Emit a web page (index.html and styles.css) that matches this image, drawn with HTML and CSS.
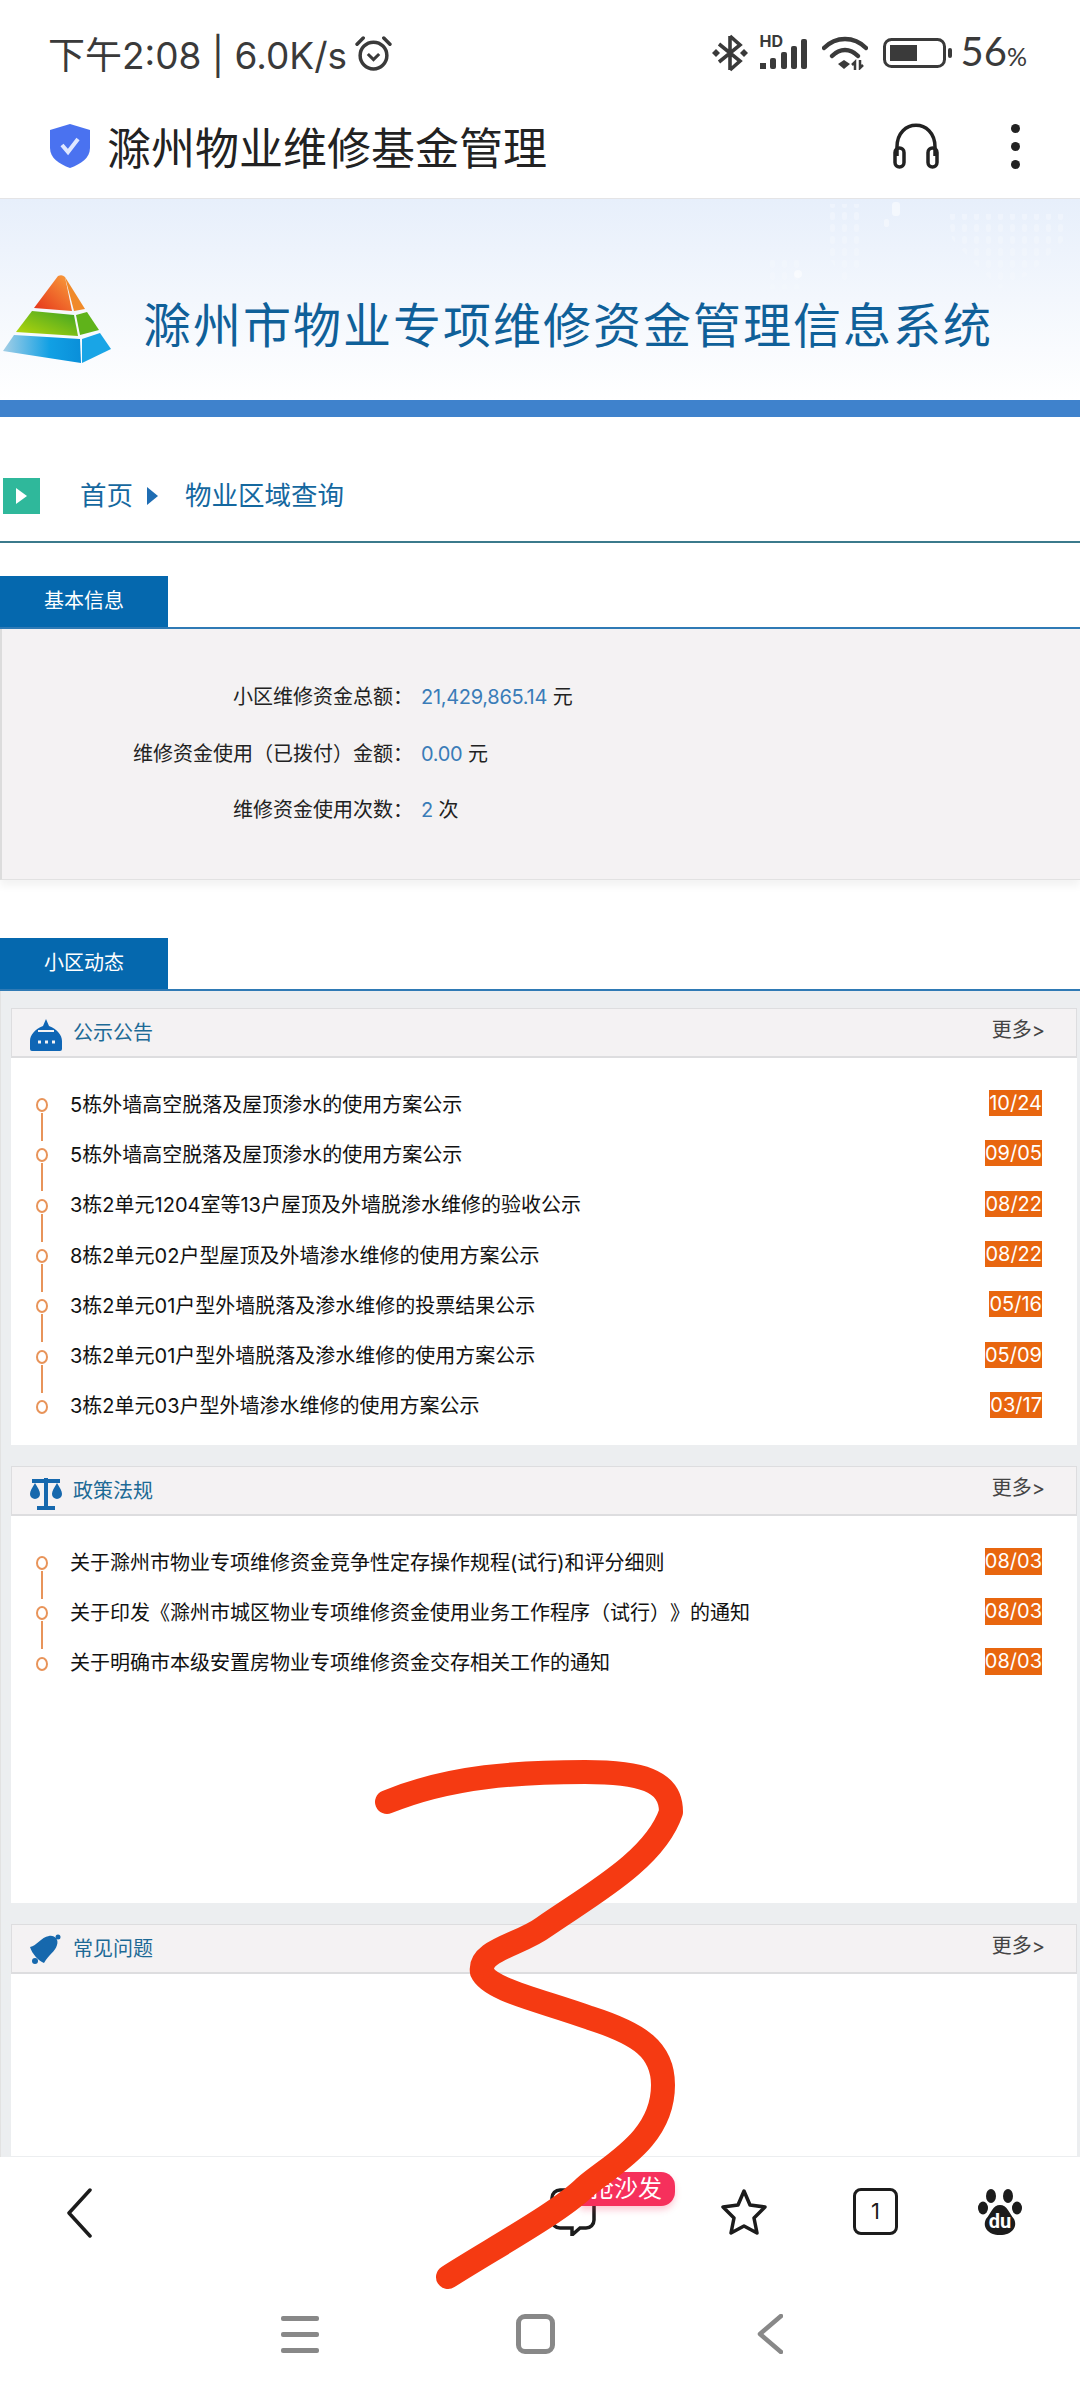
FILE: index.html
```html
<!DOCTYPE html>
<html lang="zh-CN">
<head>
<meta charset="utf-8">
<title>滁州物业维修基金管理</title>
<link rel="stylesheet" href="styles.css">
</head>
<body>
<div class="screen">
  <header class="status">
    <div class="status-left">
      <span class="clock">下午2:08 | 6.0K/s</span>
      <svg class="alarm" viewBox="0 0 36 36"><circle cx="18" cy="20" r="13" fill="none" stroke="#3a3a3a" stroke-width="3.4"/><path d="M2 9 8 3M34 9 28 3" stroke="#3a3a3a" stroke-width="3.4" stroke-linecap="round"/><path d="M12.500 18.500 18 24l5.500-5.500" fill="none" stroke="#3a3a3a" stroke-width="3"/></svg>
    </div>
    <div class="status-right">
      <svg class="bt" viewBox="0 0 36 38"><path d="M18 2v34M7 10l21 17-10 9M7 28l21-17L18 2" fill="none" stroke="#3a3a3a" stroke-width="3.600"/><path d="M0 19l4-4 4 4-4 4zM28 19l4-4 4 4-4 4z" fill="#3a3a3a"/></svg>
      <div class="signal">
        <span class="hd">HD</span>
        <svg class="bars" viewBox="0 0 48 30"><rect x="1" y="24" width="6" height="6" fill="#3a3a3a"/><rect x="11" y="19" width="6" height="11" rx="2" fill="#3a3a3a"/><rect x="22" y="13" width="6" height="17" rx="2" fill="#3a3a3a"/><rect x="32" y="7" width="6" height="23" rx="2" fill="#3a3a3a"/><rect x="42" y="0" width="6" height="30" rx="2" fill="#3a3a3a"/></svg>
      </div>
      <svg class="wifi" viewBox="0 0 46 34"><path d="M2 12C14 0 32 0 44 12" fill="none" stroke="#3a3a3a" stroke-width="4.500" stroke-linecap="round"/><path d="M10 20c8-8 18-8 26 0" fill="none" stroke="#3a3a3a" stroke-width="4.500" stroke-linecap="round"/><path d="M16 28l6-4 6 4-6 5z" fill="#3a3a3a"/><path d="M33 34V26l-3 3M38 24v8l3-3" fill="none" stroke="#3a3a3a" stroke-width="2.500"/></svg>
      <svg class="battery" viewBox="0 0 70 30"><rect x="1.500" y="1.500" width="60" height="27" rx="7" fill="none" stroke="#3a3a3a" stroke-width="3"/><rect x="7" y="7" width="27" height="16" fill="#3a3a3a"/><rect x="65" y="10" width="4" height="10" rx="2" fill="#3a3a3a"/></svg>
      <span class="pct">56<small>%</small></span>
    </div>
  </header>

  <div class="appbar">
    <svg class="shield" viewBox="0 0 40 44"><path d="M20 0l20 6v18c0 10-9 16-20 20C9 40 0 34 0 24V6z" fill="#4a72f0"/><path d="M12 21l6 7 10-13" fill="none" stroke="#dfe7ff" stroke-width="4"/></svg>
    <span class="appbar-title">滁州物业维修基金管理</span>
    <svg class="headset" viewBox="0 0 50 46"><path d="M6 33V24C6 -5 44 -5 44 24V33" fill="none" stroke="#222" stroke-width="3.500"/><rect x="4" y="25" width="9" height="19" rx="4.500" fill="none" stroke="#222" stroke-width="3.500"/><rect x="37" y="25" width="9" height="19" rx="4.500" fill="none" stroke="#222" stroke-width="3.500"/></svg>
    <div class="kebab"><i></i><i></i><i></i></div>
  </div>

  <div class="banner">
    <svg class="banner-map" viewBox="0 0 360 130">
      <defs>
        <pattern id="dots" width="12" height="12" patternUnits="userSpaceOnUse"><rect x="2" y="1" width="5" height="8" rx="2" fill="#fff"/></pattern>
        <linearGradient id="mapfade" x1="0" y1="0" x2="0" y2="1"><stop offset="0" stop-color="#fff" stop-opacity=".3"/><stop offset="1" stop-color="#fff" stop-opacity=".04"/></linearGradient>
        <mask id="mapmask"><rect width="360" height="130" fill="url(#mapfade)"/></mask>
      </defs>
      <g mask="url(#mapmask)">
        <path d="M228 15H345V40L310 75 280 90 250 60 232 40z" fill="url(#dots)"/>
        <path d="M105 5H145V60L125 85 110 60z" fill="url(#dots)"/>
        <path d="M50 60H85V90H50z" fill="url(#dots)"/>
      </g>
      <rect x="172" y="3" width="8" height="14" rx="3" fill="#fff" opacity=".5"/>
      <rect x="164" y="20" width="5" height="8" rx="2" fill="#fff" opacity=".4"/>
      <circle cx="78" cy="75" r="4" fill="#fff" opacity=".5"/>
    </svg>
    <svg class="pyramid" viewBox="2 276 110 90">
      <defs>
        <linearGradient id="pr" x1="0" y1="1" x2="1" y2="0"><stop offset="0" stop-color="#e5321a"/><stop offset="1" stop-color="#f9a13c"/></linearGradient>
        <linearGradient id="pg" x1="0" y1="1" x2="1" y2="0"><stop offset="0" stop-color="#b9d80a"/><stop offset="1" stop-color="#3da325"/></linearGradient>
        <linearGradient id="pb" x1="0" y1="0" x2="1" y2="0"><stop offset="0" stop-color="#a5cfe6"/><stop offset="0.6" stop-color="#11a0e4"/><stop offset="1" stop-color="#0a8fd9"/></linearGradient>
      </defs>
      <path d="M58 277Q62 275 65 278L72 312 34 309z" fill="url(#pr)"/>
      <path d="M65 278 85 310 74 312z" fill="#f08a2a"/>
      <path d="M32 312 74 316 78 337 16 333z" fill="url(#pg)"/>
      <path d="M76 316 87 313 99 331 80 336z" fill="#5fb31a"/>
      <path d="M14 336 80 340 81 364 3 352z" fill="url(#pb)"/>
      <path d="M82 340 100 334 111 350 82 364z" fill="#19a5e6"/>
    </svg>
    <h1 class="banner-title">滁州市物业专项维修资金管理信息系统</h1>
  </div>
  <div class="bluebar"></div>

  <nav class="crumb">
    <span class="crumb-box"></span>
    <span class="crumb-home">首页</span>
    <span class="crumb-arrow"></span>
    <span class="crumb-page">物业区域查询</span>
  </nav>

  <div class="tabline tabline-first"><span class="tab">基本信息</span></div>
  <section class="info">
    <div class="info-row"><span class="info-label">小区维修资金总额：</span><span><b class="num">21,429,865.14</b> 元</span></div>
    <div class="info-row"><span class="info-label">维修资金使用（已拨付）金额：</span><span><b class="num">0.00</b> 元</span></div>
    <div class="info-row"><span class="info-label">维修资金使用次数：</span><span><b class="num">2</b> 次</span></div>
  </section>

  <div class="tabline tabline-second"><span class="tab">小区动态</span></div>
  <section class="dynamics">
    <article class="card">
      <div class="card-head">
        <svg class="card-icon" viewBox="0 0 34 34"><path d="M17 1l3 7c8 3 13 9 13 15v8a2 2 0 0 1-2 2H3a2 2 0 0 1-2-2v-8c0-6 5-12 13-15z" fill="#0f66b5"/><path d="M9 13h16" stroke="#f4f2f3" stroke-width="2"/><path d="M9 24h3M16 24h3M23 24h3" stroke="#f4f2f3" stroke-width="3"/></svg>
        <h2 class="card-title">公示公告</h2>
        <span class="more">更多&gt;</span>
      </div>
      <ul class="news">
        <li class="news-row"><i class="dot"></i><span class="news-text">5栋外墙高空脱落及屋顶渗水的使用方案公示</span><time class="date">10/24</time></li>
        <li class="news-row"><i class="dot"></i><span class="news-text">5栋外墙高空脱落及屋顶渗水的使用方案公示</span><time class="date">09/05</time></li>
        <li class="news-row"><i class="dot"></i><span class="news-text">3栋2单元1204室等13户屋顶及外墙脱渗水维修的验收公示</span><time class="date">08/22</time></li>
        <li class="news-row"><i class="dot"></i><span class="news-text">8栋2单元02户型屋顶及外墙渗水维修的使用方案公示</span><time class="date">08/22</time></li>
        <li class="news-row"><i class="dot"></i><span class="news-text">3栋2单元01户型外墙脱落及渗水维修的投票结果公示</span><time class="date">05/16</time></li>
        <li class="news-row"><i class="dot"></i><span class="news-text">3栋2单元01户型外墙脱落及渗水维修的使用方案公示</span><time class="date">05/09</time></li>
        <li class="news-row"><i class="dot"></i><span class="news-text">3栋2单元03户型外墙渗水维修的使用方案公示</span><time class="date">03/17</time></li>
      </ul>
    </article>
    <article class="card">
      <div class="card-head">
        <svg class="card-icon" viewBox="0 0 34 34"><path d="M3 5h28" stroke="#1668ad" stroke-width="4"/><path d="M17 2v28M8 32h18" stroke="#1668ad" stroke-width="4"/><path d="M6 7c3 5 5 8 5 11a5 5 0 0 1-10 0c0-3 2-6 5-11zM28 7c3 5 5 8 5 11a5 5 0 0 1-10 0c0-3 2-6 5-11z" fill="#1668ad"/></svg>
        <h2 class="card-title">政策法规</h2>
        <span class="more">更多&gt;</span>
      </div>
      <ul class="news">
        <li class="news-row news-row-wide"><i class="dot"></i><span class="news-text">关于滁州市物业专项维修资金竞争性定存操作规程(试行)和评分细则</span><time class="date">08/03</time></li>
        <li class="news-row news-row-wide"><i class="dot"></i><span class="news-text">关于印发《滁州市城区物业专项维修资金使用业务工作程序（试行）》的通知</span><time class="date">08/03</time></li>
        <li class="news-row news-row-wide"><i class="dot"></i><span class="news-text">关于明确市本级安置房物业专项维修资金交存相关工作的通知</span><time class="date">08/03</time></li>
      </ul>
    </article>
    <article class="card card-last">
      <div class="card-head">
        <svg class="card-icon" viewBox="0 0 34 34"><path d="M1 13C8 12 12 3 20 2C26 1 30 6 28 11C26 18 20 20 15 29C10 27 3 20 1 13z" fill="#1668ad"/><circle cx="29" cy="3" r="2.500" fill="#1668ad"/><circle cx="6" cy="27" r="3" fill="#1668ad"/></svg>
        <h2 class="card-title">常见问题</h2>
        <span class="more">更多&gt;</span>
      </div>
    </article>
  </section>

  <div class="toolbar">
    <svg class="tool-back" viewBox="0 0 26 50"><path d="M24 2 3 25l21 23" fill="none" stroke="#1c1c1c" stroke-width="3.500" stroke-linecap="round" stroke-linejoin="round"/></svg>
    <div class="tool-comment">
      <svg class="tool-icon" viewBox="0 0 46 48"><path d="M10 2h26a8 8 0 0 1 8 8v22a8 8 0 0 1-8 8h-6l-8 7v-7H10a8 8 0 0 1-8-8V10a8 8 0 0 1 8-8z" fill="none" stroke="#1c1c1c" stroke-width="3.500"/></svg>
      <span class="badge">抢沙发</span>
    </div>
    <svg class="tool-star" viewBox="0 0 48 48"><path d="M24 3l6 14 15 2-11 11 3 15-13-7-13 7 3-15L3 19l15-2z" fill="none" stroke="#1c1c1c" stroke-width="3.500" stroke-linejoin="round"/></svg>
    <div class="tool-tabs">1</div>
    <svg class="tool-paw" viewBox="0 0 44 48"><ellipse cx="13" cy="8" rx="5" ry="7" fill="#1c1c1c"/><ellipse cx="30" cy="8" rx="5" ry="7" fill="#1c1c1c"/><ellipse cx="5" cy="20" rx="5" ry="6.500" fill="#1c1c1c"/><ellipse cx="39" cy="20" rx="5" ry="6.500" fill="#1c1c1c"/><path d="M22 17c7 0 9 8 14 14 4 8-2 16-14 16S4 39 8 31c5-6 7-14 14-14z" fill="#1c1c1c"/><text class="du" x="22" y="40" text-anchor="middle">du</text></svg>
  </div>

  <div class="navbar">
    <div class="nav-menu"><i></i><i></i><i></i></div>
    <div class="nav-home"></div>
    <svg class="nav-back" viewBox="0 0 26 40"><path d="M24 2 3 20l21 18" fill="none" stroke="#888" stroke-width="4.500" stroke-linecap="round" stroke-linejoin="round"/></svg>
  </div>

  <svg class="scribble" viewBox="0 0 1080 2400"><path d="M387 1802C450 1776 520 1772 585 1772C640 1772 671 1780 671 1812C655 1860 590 1895 544 1927C520 1945 478 1950 482 1972C490 1990 540 2000 590 2018C640 2034 663 2050 663 2085C663 2140 610 2165 585 2187C560 2212 490 2250 448 2277" fill="none" stroke="#f53a12" stroke-width="24" stroke-linecap="round" stroke-linejoin="round"/></svg>
</div>
</body>
</html>
```
FILE: styles.css
```css
* { box-sizing: border-box; }
html, body { margin: 0; padding: 0; }
body {
  width: 1080px;
  height: 2400px;
  overflow: hidden;
  background: #fff;
  font-family: Inter, "Noto Sans CJK SC", sans-serif;
  font-size: 20px;
  color: #111;
  text-spacing-trim: space-all;
}
.screen { position: relative; width: 1080px; height: 2400px; overflow: hidden; }

.status { height: 100px; display: flex; align-items: center; justify-content: space-between; padding: 6px 53px 0 48px; color: #3a3a3a; }
.status-left { display: flex; align-items: center; gap: 8px; }
.clock { font-size: 37px; }
.alarm { width: 37px; height: 37px; }
.status-right { display: flex; align-items: center; }
.bt { width: 36px; height: 38px; margin-right: 11px; }
.signal { position: relative; width: 48px; height: 32px; margin-right: 15px; }
.hd { position: absolute; left: 1px; top: -4px; font-size: 16px; font-weight: 700; line-height: 16px; }
.bars { display: block; width: 48px; height: 30px; margin-top: 2px; }
.wifi { width: 46px; height: 34px; margin-right: 15px; }
.battery { width: 70px; height: 30px; margin-right: 8px; }
.pct { font-family: Lato, Roboto, sans-serif; font-size: 40px; line-height: 40px; }
.pct small { font-size: 25px; }

.appbar { height: 99px; display: flex; align-items: center; padding: 0 60px 6px 50px; border-bottom: 1px solid #e4e4e6; }
.shield { width: 40px; height: 44px; margin-right: 17px; }
.appbar-title { font-size: 44px; color: #222; font-weight: 400; }
.headset { width: 50px; height: 46px; margin-left: auto; }
.kebab { display: flex; flex-direction: column; gap: 9px; margin-left: 70px; }
.kebab i { display: block; width: 9px; height: 9px; border-radius: 50%; background: #222; }

.banner {
  position: relative;
  height: 201px;
  display: flex;
  align-items: center;
  padding: 76px 0 35px 2px;
  background: linear-gradient(180deg, #e7effb 0%, #ffffff 100%);
}
.banner-map { position: absolute; left: 720px; top: 0; width: 360px; height: 130px; }
.pyramid { position: relative; width: 110px; height: 90px; flex: none; }
.banner-title { position: relative; margin: 3px 0 0 31px; font-size: 48px; letter-spacing: 2px; font-weight: 400; color: #0f6099; white-space: nowrap; }
.bluebar { height: 17px; background: #3f82cc; }

.crumb { height: 126px; display: flex; align-items: flex-start; padding: 61px 0 0 3px; border-bottom: 2px solid #3b7a8c; color: #15689f; font-size: 26.500px; line-height: 34px; }
.crumb-box { position: relative; width: 37px; height: 36px; background: #2fb89b; margin-right: 40px; }
.crumb-box::after { content: ""; position: absolute; left: 13px; top: 10px; border-left: 11px solid #fff; border-top: 8px solid transparent; border-bottom: 8px solid transparent; }
.crumb-arrow { width: 0; height: 0; margin: 9px 27px 0 14px; border-left: 11px solid #1f6db3; border-top: 9px solid transparent; border-bottom: 9px solid transparent; }

.tabline { display: flex; border-bottom: 2px solid #2f7ab5; }
.tabline-first { margin-top: 33px; }
.tabline-second { margin-top: 58px; }
.tab { width: 168px; height: 51px; background: #0568ae; color: #fff; text-align: center; line-height: 50px; font-size: 20px; }

.info { height: 251px; padding-top: 38px; background: #f4f2f3; border-left: 2px solid #dcdcdc; border-bottom: 1px solid #e2e2e2; box-shadow: 0 6px 8px rgba(0,0,0,.05); }
.info-row { display: grid; grid-template-columns: 411px 1fr; column-gap: 8px; height: 56.700px; align-items: center; color: #222; }
.info-label { text-align: right; }
.num { font-weight: 400; color: #3a7cb8; letter-spacing: -0.3px; }

.dynamics { padding: 17px 3px 0 10px; background: #eceef0; border-left: 1px solid #e2e2e2; height: 1166px; display: flex; flex-direction: column; gap: 21px; }
.card { height: 437px; background: #fff; }
.card-last { height: 232px; }
.card-head { height: 50px; display: flex; align-items: center; padding: 0 31px 0 17px; background: #f4f2f3; border: 1px solid #dddddf; border-bottom-width: 2px; }
.card-icon { width: 34px; height: 34px; margin-top: 4px; }
.card-title { margin: -2px 0 0 10px; font-size: 20px; font-weight: 400; color: #1d6a96; }
.more { margin-left: auto; margin-top: -8px; color: #444; font-size: 20px; }

.news { list-style: none; margin: 0; padding: 20px 35px 0 25px; }
.news-row { display: flex; align-items: center; height: 50.300px; }
.dot { position: relative; flex: none; width: 12px; height: 14px; margin: 4px 22px 0 0; border: 2.500px solid #e8945a; border-radius: 50%; }
.dot::after { content: ""; position: absolute; left: 3px; top: 13px; width: 1.500px; height: 28px; background: #e8945a; }
.news-row:last-child .dot::after { display: none; }
.news-text { flex: 1; color: #111; white-space: nowrap; }
.date { height: 26px; line-height: 26px; background: #e8660f; color: #fff; }
.news-row-wide .date { height: 27px; line-height: 27px; }

.toolbar { height: 125px; display: flex; align-items: flex-start; padding: 31px 0 0 66px; background: #fff; }
.tool-back { width: 26px; height: 50px; }
.tool-comment { position: relative; width: 46px; height: 48px; margin-left: 458px; }
.tool-icon { display: block; width: 46px; height: 48px; }
.badge { position: absolute; left: 30px; top: -16px; width: 95px; height: 34px; padding-left: 10px; border-radius: 14px 14px 14px 2px; background: #f6305c; box-shadow: 0 4px 6px rgba(246,48,92,.25); color: #fff; font-size: 24px; line-height: 34px; white-space: nowrap; }
.tool-star { width: 48px; height: 48px; margin-left: 124px; }
.tool-tabs { width: 45px; height: 47px; margin-left: 85px; border: 3.500px solid #1c1c1c; border-radius: 8px; text-align: center; font-size: 22px; line-height: 40px; color: #1c1c1c; }
.tool-paw { width: 44px; height: 48px; margin-left: 80px; }
.du { font-family: Roboto, sans-serif; font-size: 20px; font-weight: 700; fill: #fff; }

.navbar { height: 120px; display: flex; align-items: flex-start; padding: 32px 0 0 281px; background: #fff; }
.nav-menu { display: flex; flex-direction: column; gap: 11px; margin-top: 2px; }
.nav-menu i { display: block; width: 38px; height: 5px; border-radius: 2px; background: #888; }
.nav-home { width: 39px; height: 40px; margin-left: 197px; border: 5px solid #888; border-radius: 9px; }
.nav-back { width: 26px; height: 40px; margin-left: 202px; }

.scribble { position: absolute; left: 0; top: 0; width: 1080px; height: 2400px; pointer-events: none; }
```
